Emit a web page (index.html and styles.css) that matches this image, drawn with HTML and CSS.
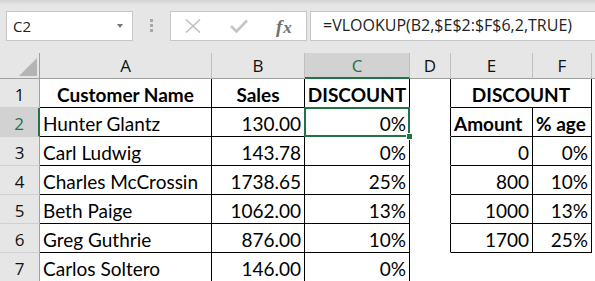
FILE: index.html
```html
<!DOCTYPE html>
<html lang="en">
<head>
  <meta charset="UTF-8" />
  <meta name="viewport" content="width=device-width, initial-scale=1" />
  <title>Discount lookup</title>
  <link rel="stylesheet" href="styles.css">
</head>
<body>
  <div class="formula-bar">
    <div class="name-box">C2<span class="caret"></span></div>
    <div class="grip"><i></i><i></i><i></i></div>
    <div class="fx-buttons">
      <svg class="btn-cancel" width="16" height="14" viewBox="0 0 16 14">
        <path d="M1 0.5 L15 13.5 M15 0.5 L1 13.5" stroke="#bfbfbf" stroke-width="1.5" fill="none"/>
      </svg>
      <svg class="btn-enter" width="18" height="14" viewBox="0 0 18 14">
        <path d="M1 7 L6.5 12.5 L17 1.5" stroke="#c6c6c6" stroke-width="2.6" fill="none"/>
      </svg>
      <span class="fx"><i>f</i><i>x</i></span>
    </div>
    <div class="formula">=VLOOKUP(B2,$E$2:$F$6,2,TRUE)</div>
  </div>

  <div class="sheet">
    <!-- column headers -->
    <div class="corner"><span></span></div>
    <div class="ch">A</div>
    <div class="ch">B</div>
    <div class="ch sel">C</div>
    <div class="ch">D</div>
    <div class="ch">E</div>
    <div class="ch">F</div>
    <div class="ch"></div>

    <!-- row 1 -->
    <div class="rh">1</div>
    <div class="c bd bold ctr">Customer Name</div>
    <div class="c bd bold ctr">Sales</div>
    <div class="c bd bold ctr">DISCOUNT</div>
    <div class="c br"></div>
    <div class="c bd bold ctr merged">DISCOUNT</div>
    <div class="c"></div>

    <!-- row 2 -->
    <div class="rh sel">2</div>
    <div class="c bd">Hunter Glantz</div>
    <div class="c bd num">130.00</div>
    <div class="c bd num active">0%</div>
    <div class="c br"></div>
    <div class="c bd bold">Amount</div>
    <div class="c bd bold">% age</div>
    <div class="c"></div>

    <!-- row 3 -->
    <div class="rh">3</div>
    <div class="c bd">Carl Ludwig</div>
    <div class="c bd num">143.78</div>
    <div class="c bd num">0%</div>
    <div class="c br"></div>
    <div class="c bd num">0</div>
    <div class="c bd num">0%</div>
    <div class="c"></div>

    <!-- row 4 -->
    <div class="rh">4</div>
    <div class="c bd">Charles McCrossin</div>
    <div class="c bd num">1738.65</div>
    <div class="c bd num">25%</div>
    <div class="c br"></div>
    <div class="c bd num">800</div>
    <div class="c bd num">10%</div>
    <div class="c"></div>

    <!-- row 5 -->
    <div class="rh">5</div>
    <div class="c bd">Beth Paige</div>
    <div class="c bd num">1062.00</div>
    <div class="c bd num">13%</div>
    <div class="c br"></div>
    <div class="c bd num">1000</div>
    <div class="c bd num">13%</div>
    <div class="c"></div>

    <!-- row 6 -->
    <div class="rh">6</div>
    <div class="c bd">Greg Guthrie</div>
    <div class="c bd num">876.00</div>
    <div class="c bd num">10%</div>
    <div class="c br"></div>
    <div class="c bd num">1700</div>
    <div class="c bd num">25%</div>
    <div class="c"></div>

    <!-- row 7 -->
    <div class="rh">7</div>
    <div class="c bd">Carlos Soltero</div>
    <div class="c bd num">146.00</div>
    <div class="c bd num">0%</div>
    <div class="c"></div>
    <div class="c"></div>
    <div class="c"></div>
    <div class="c"></div>
  </div>
</body>
</html>
```

FILE: styles.css
```css
body {
  margin: 0;
  width: 595px;
  height: 281px;
  overflow: hidden;
  background: #e6e6e6;
  font-family: 'Open Sans', 'Noto Sans', sans-serif;
  color: #222;
}

/* formula bar */
.formula-bar {
  display: flex;
  align-items: flex-start;
  height: 53px;
  box-sizing: border-box;
  padding: 11px 0 0 6px;
  background: linear-gradient(#d3d3d3, #e6e6e6 5px);
}
.name-box {
  box-sizing: border-box;
  width: 127px;
  height: 30px;
  border: 1px solid #c6c6c6;
  background: #fff;
  display: flex;
  align-items: center;
  justify-content: space-between;
  padding: 0 9px 0 6px;
  font-size: 15px;
  color: #222;
}
.caret {
  width: 0;
  height: 0;
  border-left: 3.5px solid transparent;
  border-right: 3.5px solid transparent;
  border-top: 4px solid #777;
}
.grip {
  display: flex;
  flex-direction: column;
  gap: 2px;
  margin: 8px 0 0 17px;
}
.grip i {
  display: block;
  width: 3px;
  height: 3px;
  background: #a8a8a8;
}
.fx-buttons {
  box-sizing: border-box;
  width: 137px;
  height: 30px;
  margin-left: 17px;
  border: 1px solid #c6c6c6;
  background: #fff;
  display: flex;
  align-items: center;
}
.btn-cancel {
  margin-left: 14px;
}
.btn-enter {
  margin-left: 29px;
}
.fx {
  margin-left: 28px;
  font-family: 'Liberation Serif', serif;
  font-size: 19px;
  font-weight: 700;
  color: #707070;
  line-height: 1;
}
.fx i + i {
  font-size: 17px;
  margin-left: 1px;
}
.formula {
  box-sizing: border-box;
  flex: 1;
  height: 30px;
  margin-left: 3px;
  border: 1px solid #c6c6c6;
  border-right: none;
  background: #fff;
  padding-left: 12px;
  font-size: 16px;
  line-height: 27px;
  color: #222;
  white-space: nowrap;
}

/* worksheet grid */
.sheet {
  display: grid;
  grid-template-columns: 40px 172px 93px 105px 41px 82px 59px 1fr;
  grid-template-rows: 26px repeat(7, 29px);
  background: #fff;
}
.sheet > div {
  box-sizing: border-box;
  min-width: 0;
  display: flex;
  white-space: nowrap;
  border-right: 1px solid transparent;
  border-bottom: 1px solid transparent;
}

.corner {
  background: #e6e6e6;
  border-right-color: #a0a0a0 !important;
  border-bottom-color: #a0a0a0 !important;
  justify-content: flex-end;
  align-items: flex-end;
  padding: 0 2px 2px 0;
}
.corner span {
  width: 18px;
  height: 18px;
  background: #b4b4b4;
  clip-path: polygon(100% 0, 100% 100%, 0 100%);
}

.ch {
  background: #e6e6e6;
  border-right-color: #c0c0c0 !important;
  border-bottom-color: #a0a0a0 !important;
  justify-content: center;
  align-items: center;
  font-size: 17px;
  color: #111;
}
.ch.sel {
  background: #d2d2d2;
  color: #217346;
  border-bottom: 2px solid #217346 !important;
}

.rh {
  background: #e6e6e6;
  border-right-color: #a0a0a0 !important;
  border-bottom-color: #d0d0d0 !important;
  justify-content: center;
  align-items: center;
  padding-top: 3px;
  font-size: 17px;
  color: #111;
}
.rh.sel {
  background: #d2d2d2;
  color: #217346;
  border-right: 2px solid #217346 !important;
}

.c {
  font-family: Lato, 'Liberation Sans', sans-serif;
  font-size: 19px;
  line-height: 20px;
  color: #000;
  align-items: flex-end;
  padding: 0 3px 2px 3px;
}
.bold {
  font-weight: 700;
}
.ctr {
  justify-content: center;
}
.num {
  justify-content: flex-end;
}
.merged {
  grid-column: span 2;
}
.bd {
  border-right-color: #000 !important;
  border-bottom-color: #000 !important;
}
.br {
  border-right-color: #000 !important;
}

/* active cell outline and fill handle */
.active {
  position: relative;
}
.active::after {
  content: "";
  position: absolute;
  left: -1px;
  top: -1px;
  right: -1px;
  bottom: -1px;
  border: 2px solid #217346;
}
.active::before {
  content: "";
  position: absolute;
  right: -3px;
  bottom: -3px;
  width: 5px;
  height: 5px;
  background: #217346;
  box-shadow: 0 0 0 1px #fff;
  z-index: 1;
}
```
